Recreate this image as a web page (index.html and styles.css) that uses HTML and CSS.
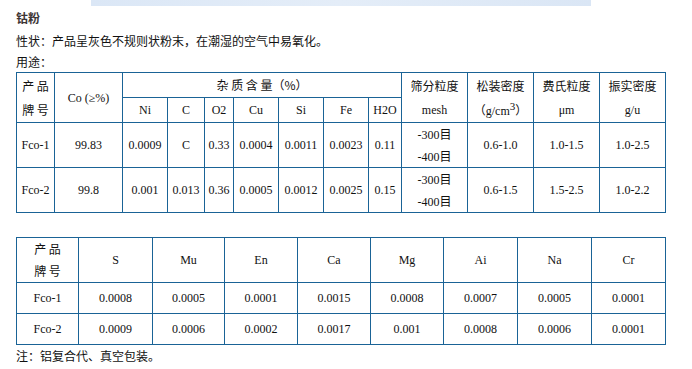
FILE: index.html
```html
<!DOCTYPE html>
<html>
<head>
<meta charset="utf-8">
<link rel="stylesheet" href="styles.css">
</head>
<body>
<div class="banner"></div>
<div class="content">
  <h1 class="title">钴粉</h1>
  <p class="line">性状：产品呈灰色不规则状粉末，在潮湿的空气中易氧化。</p>
  <p class="line">用途：</p>
  <table class="spec t1">
    <colgroup>
      <col class="c38"><col class="c68"><col class="c45"><col class="c37"><col class="c29"><col class="c45"><col class="c45"><col class="c45"><col class="c33"><col class="c66"><col class="c66"><col class="c66"><col class="c66">
    </colgroup>
    <tr class="h1">
      <td rowspan="2" class="cn"><span class="ln l24">产 品</span><span class="ln l24">牌 号</span></td>
      <td rowspan="2">Co (≥%)</td>
      <td colspan="7" class="cn">杂 质 含 量（%）</td>
      <td rowspan="2"><span class="ln l24 cn">筛分粒度</span><span class="ln l24">mesh</span></td>
      <td rowspan="2"><span class="ln l24 cn">松装密度</span><span class="ln l24"><span class="cn">（</span>g/cm<sup>3</sup><span class="cn">）</span></span></td>
      <td rowspan="2"><span class="ln l24 cn">费氏粒度</span><span class="ln l24">μm</span></td>
      <td rowspan="2"><span class="ln l24 cn">振实密度</span><span class="ln l24">g/u</span></td>
    </tr>
    <tr class="h2">
      <td>Ni</td><td>C</td><td>O2</td><td>Cu</td><td>Si</td><td>Fe</td><td>H2O</td>
    </tr>
    <tr class="d">
      <td>Fco-1</td><td>99.83</td><td>0.0009</td><td>C</td><td>0.33</td><td>0.0004</td><td>0.0011</td><td>0.0023</td><td>0.11</td>
      <td><span class="ln l22">-300<span class="cn">目</span></span><span class="ln l22">-400<span class="cn">目</span></span></td>
      <td>0.6-1.0</td><td>1.0-1.5</td><td>1.0-2.5</td>
    </tr>
    <tr class="d">
      <td>Fco-2</td><td>99.8</td><td>0.001</td><td>0.013</td><td>0.36</td><td>0.0005</td><td>0.0012</td><td>0.0025</td><td>0.15</td>
      <td><span class="ln l22">-300<span class="cn">目</span></span><span class="ln l22">-400<span class="cn">目</span></span></td>
      <td>0.6-1.5</td><td>1.5-2.5</td><td>1.0-2.2</td>
    </tr>
  </table>

  <table class="spec t2">
    <colgroup>
      <col class="c62"><col class="c74"><col class="c72"><col class="c73"><col class="c73"><col class="c73"><col class="c74"><col class="c74"><col class="c74">
    </colgroup>
    <tr class="h3">
      <td class="cn"><span class="ln l22">产 品</span><span class="ln l22">牌 号</span></td><td>S</td><td>Mu</td><td>En</td><td>Ca</td><td>Mg</td><td>Ai</td><td>Na</td><td>Cr</td>
    </tr>
    <tr class="d2">
      <td>Fco-1</td><td>0.0008</td><td>0.0005</td><td>0.0001</td><td>0.0015</td><td>0.0008</td><td>0.0007</td><td>0.0005</td><td>0.0001</td>
    </tr>
    <tr class="d2">
      <td>Fco-2</td><td>0.0009</td><td>0.0006</td><td>0.0002</td><td>0.0017</td><td>0.001</td><td>0.0008</td><td>0.0006</td><td>0.0001</td>
    </tr>
  </table>
  <p class="note">注：铝复合代、真空包装。</p>
</div>
</body>
</html>
```

FILE: styles.css
```css
html, body {
  margin: 0;
  padding: 0;
  background: #ffffff;
}
body {
  font-family: "Noto Sans CJK SC", "Noto Sans", sans-serif;
  font-size: 12px;
  color: #111;
}
.banner {
  margin-left: 91px;
  width: 500px;
  height: 6px;
  background: linear-gradient(90deg, #dbe7f6, #e4edf8 50%, #dae6f5);
}
.content {
  padding-left: 16px;
}
.title {
  margin: 1px 0 2px 0;
  height: 21px;
  font-size: 12px;
  line-height: 21px;
  font-weight: bold;
  color: #3d3535;
}
.line {
  margin: 0;
  height: 21px;
  line-height: 21px;
}
.spec {
  border-collapse: collapse;
  table-layout: fixed;
  font-family: "Liberation Serif", "Noto Sans CJK SC", serif;
  font-size: 12px;
  color: #111;
}
.spec td {
  border: 1px solid #1a6396;
  text-align: center;
  vertical-align: middle;
  padding: 0;
  line-height: 14px;
}
.cn {
  font-family: "Noto Sans CJK SC", sans-serif;
}
.ln {
  display: block;
  overflow: visible;
  white-space: nowrap;
}
.l24 { height: 24px; line-height: 24px; }
.l22 { height: 22px; line-height: 22px; }
.spec sup {
  font-size: 11px;
  line-height: 0;
  vertical-align: 5px;
}
.t1 {
  width: 650px;
}
.t2 {
  width: 650px;
  margin-top: 24px;
}
.h1 { height: 25px; }
.h2 { height: 25px; }
.d { height: 45px; }
.h3 { height: 44px; }
.d2 { height: 31px; }
.c29 { width: 29px; }
.c33 { width: 33px; }
.c37 { width: 37px; }
.c38 { width: 38px; }
.c45 { width: 45px; }
.c62 { width: 62px; }
.c66 { width: 66px; }
.c68 { width: 68px; }
.c72 { width: 72px; }
.c73 { width: 73px; }
.c74 { width: 74px; }
.note {
  margin: 0;
  height: 22px;
  line-height: 22px;
}
```
